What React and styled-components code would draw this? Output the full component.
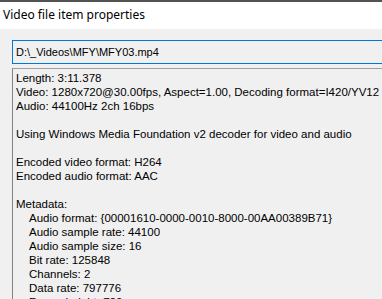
import React from "react";
import styled, { createGlobalStyle } from "styled-components";

const Global = createGlobalStyle`
  html, body {
    margin: 0;
    padding: 0;
    width: 382px;
    height: 299px;
    overflow: hidden;
    background: #f0f0f0;
  }
`;

const Window = styled.div`
  display: flex;
  flex-direction: column;
  width: 382px;
  height: 299px;
  overflow: hidden;
  border-top: 2px solid #525252;
  box-sizing: border-box;
  background: #f0f0f0;
`;

const TitleBar = styled.div`
  height: 27px;
  flex-shrink: 0;
  background: #ffffff;
  display: flex;
  align-items: center;
  padding-left: 3px;
  font-family: "Noto Sans", "Open Sans", sans-serif;
  font-size: 12px;
  color: #000;
  padding-bottom: 2px;
  box-sizing: border-box;
`;

const Body = styled.div`
  flex: 1;
  display: flex;
  flex-direction: column;
  gap: 4px;
  padding: 11px 0 0 12px;
  min-height: 0;
`;

const PathBox = styled.div`
  width: 420px;
  height: 24px;
  flex-shrink: 0;
  box-sizing: border-box;
  border: 1px solid #0078d7;
  background: #f0f0f0;
  display: flex;
  align-items: center;
  padding-left: 3px;
  font-family: "Liberation Sans", Arial, sans-serif;
  font-size: 11px;
  color: #000;
`;

const InfoBox = styled.div`
  flex: 1;
  width: 420px;
  box-sizing: border-box;
  border-top: 1px solid #a0a0a0;
  border-left: 1px solid #828282;
  padding: 2px 0 0 3px;
  font-family: "Liberation Sans", Arial, sans-serif;
  font-size: 11.5px;
  line-height: 14px;
  color: #000;
  overflow: hidden;
`;

const Line = styled.div`
  height: 14px;
  white-space: pre;
  padding-left: ${(p) => (p.$indent ? "13px" : "0")};
`;

const lines = [
  ["Length: 3:11.378"],
  ["Video: 1280x720@30.00fps, Aspect=1.00, Decoding format=I420/YV12"],
  ["Audio: 44100Hz 2ch 16bps"],
  [""],
  ["Using Windows Media Foundation v2 decoder for video and audio"],
  [""],
  ["Encoded video format: H264"],
  ["Encoded audio format: AAC"],
  [""],
  ["Metadata:"],
  ["Audio format: {00001610-0000-0010-8000-00AA00389B71}", true],
  ["Audio sample rate: 44100", true],
  ["Audio sample size: 16", true],
  ["Bit rate: 125848", true],
  ["Channels: 2", true],
  ["Data rate: 797776", true],
  ["Frame height: 720", true],
];

export default function App() {
  return (
    <>
      <Global />
      <Window>
        <TitleBar>Video file item properties</TitleBar>
        <Body>
          <PathBox>D:\_Videos\MFY\MFY03.mp4</PathBox>
          <InfoBox>
            {lines.map(([text, indent], i) => (
              <Line key={i} $indent={indent}>
                {text}
              </Line>
            ))}
          </InfoBox>
        </Body>
      </Window>
    </>
  );
}
